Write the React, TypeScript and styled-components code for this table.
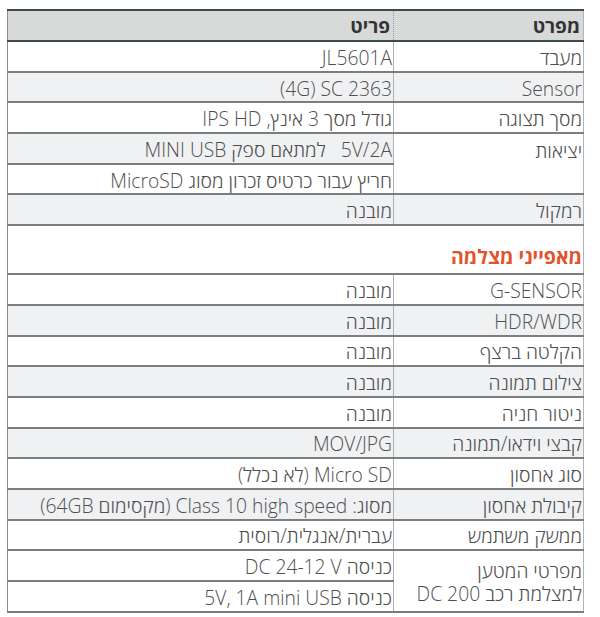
import styled, { createGlobalStyle } from "styled-components"

const GlobalStyle = createGlobalStyle`
  body {
    margin: 0;
    background: #fff;
    font-family: "Open Sans", "Noto Sans", "DejaVu Sans", sans-serif;
  }
`

const Page = styled.div`
  padding: 9px 16px 0 8px;
  direction: rtl;
`

const Table = styled.table`
  width: 576px;
  border-collapse: collapse;
  border-left: 1px solid #8c8c8c;
  border-right: 1px solid #b4b4b4;
  border-bottom: 2px solid #6f7474;
  table-layout: fixed;
`

const HeadCell = styled.th<{ $side?: boolean }>`
  height: 29px;
  padding: 0 3px 0 0;
  background: #d8d9d9;
  border-top: 2px solid #3f4b4b;
  border-bottom: 2px solid #3f4b4b;
  border-left: ${p => (p.$side ? "1px dotted #9a9a9a" : "none")};
  text-align: right;
  font-size: 19px;
  font-weight: 700;
  color: #333;
`

const Cell = styled.td<{ $label?: boolean; $shade?: boolean; $top?: boolean }>`
  height: 26.7px;
  padding: ${p => (p.$top ? "5px 1px 0 0" : "2px 1px 0 0")};
  border-bottom: 2px solid #7b7e7e;
  border-left: ${p => (p.$label ? "1px solid #b0b0b0" : "none")};
  background: ${p => (p.$shade ? "#f0f1f3" : "#fff")};
  text-align: right;
  vertical-align: ${p => (p.$top ? "top" : "middle")};
  font-size: 19.3px;
  font-weight: 300;
  color: #4f4f4f;
  line-height: 23px;
  white-space: pre-line;
`

const SectionCell = styled.td`
  height: 34px;
  padding: 13px 1px 0 0;
  border-bottom: 2px solid #7b7e7e;
  text-align: right;
  font-size: 19.5px;
  font-weight: 700;
  color: #e2532b;
`

const Ltr = styled.span`
  direction: ltr;
  unicode-bidi: isolate;
`

type Row = { label: string; values: React.ReactNode[]; shade?: boolean[]; top?: boolean }

const top: Row[] = [
  { label: "מעבד", values: ["JL5601A"] },
  { label: "Sensor", values: [<Ltr>(4G) SC 2363</Ltr>], shade: [true] },
  { label: "מסך תצוגה", values: ["גודל מסך 3 אינץ, IPS HD"] },
  {
    label: "יציאות",
    values: ["5V/2A\u00a0\u00a0 למתאם ספק MINI USB", "חריץ עבור כרטיס זכרון מסוג MicroSD"],
    shade: [true, false],
    top: true,
  },
  { label: "רמקול", values: ["מובנה"], shade: [true] },
]

const camera: Row[] = [
  { label: "G-SENSOR", values: ["מובנה"] },
  { label: "HDR/WDR", values: ["מובנה"], shade: [true] },
  { label: "הקלטה ברצף", values: ["מובנה"] },
  { label: "צילום תמונה", values: ["מובנה"], shade: [true] },
  { label: "ניטור חניה", values: ["מובנה"] },
  { label: "קבצי וידאו/תמונה", values: ["MOV/JPG"], shade: [true] },
  { label: "סוג אחסון", values: ["Micro SD (לא נכלל)"] },
  { label: "קיבולת אחסון", values: ["מסוג: Class 10 high speed (מקסימום 64GB)"], shade: [true] },
  { label: "ממשק משתמש", values: ["עברית/אנגלית/רוסית"] },
  {
    label: "מפרטי המטען\nלמצלמת רכב DC 200",
    values: ["כניסה DC 24-12 V", "כניסה 5V, 1A mini USB"],
  },
]

function Rows({ rows }: { rows: Row[] }) {
  return (
    <>
      {rows.map(r =>
        r.values.map((v, i) => {
          const shaded = r.shade ? r.shade[i] : false
          const allShaded = r.values.length === 1 && shaded
          return (
            <tr key={r.label + i}>
              {i === 0 && (
                <Cell $label $top={r.top} $shade={allShaded} rowSpan={r.values.length}>
                  {r.label}
                </Cell>
              )}
              <Cell $shade={shaded}>{v}</Cell>
            </tr>
          )
        })
      )}
    </>
  )
}

export default function App() {
  return (
    <>
      <GlobalStyle />
      <Page>
        <Table>
          <colgroup>
            <col style={{ width: 190 }} />
            <col style={{ width: 386 }} />
          </colgroup>
          <thead>
            <tr>
              <HeadCell $side>מפרט</HeadCell>
              <HeadCell>פריט</HeadCell>
            </tr>
          </thead>
          <tbody>
            <Rows rows={top} />
            <tr>
              <SectionCell colSpan={2}>מאפייני מצלמה</SectionCell>
            </tr>
            <Rows rows={camera} />
          </tbody>
        </Table>
      </Page>
    </>
  )
}
